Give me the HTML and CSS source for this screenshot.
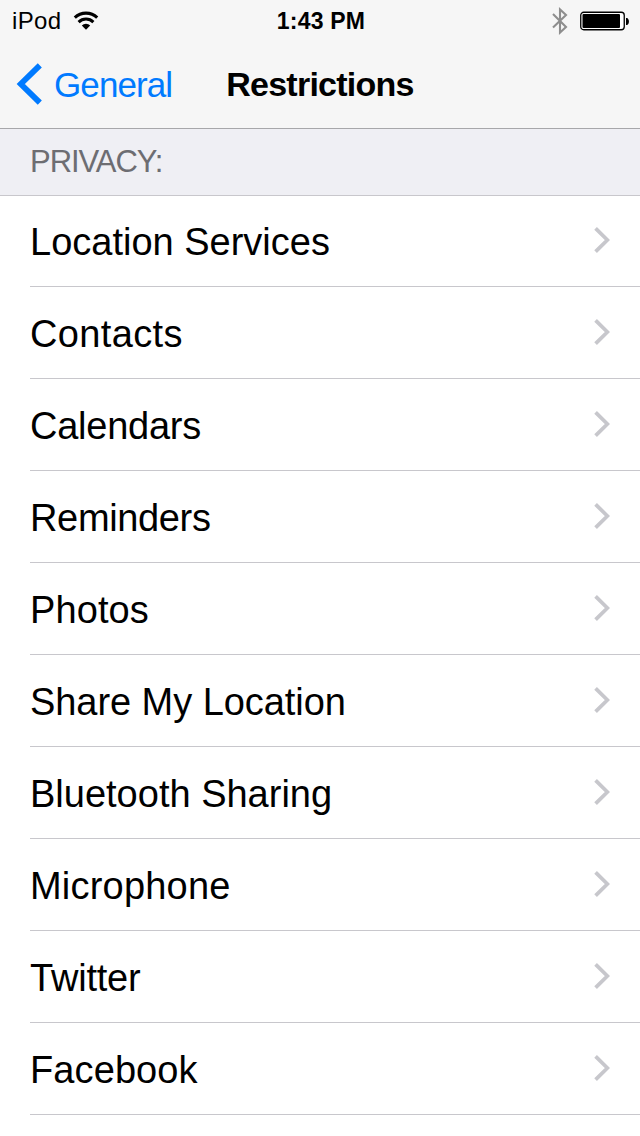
FILE: index.html
```html
<!DOCTYPE html>
<html lang="en">
<head>
    <meta charset="UTF-8">
    <meta name="viewport" content="width=device-width, initial-scale=1.0">
    <title>Restrictions</title>
    <link rel="stylesheet" href="styles.css">
</head>
<body>
    <header class="top">
        <div class="status-bar">
            <div class="carrier">
                <span class="device">iPod</span>
                <svg class="wifi" width="26" height="20" viewBox="0 0 26 20">
                    <path d="M1.8 6.6A16.2 16.2 0 0 1 24.2 6.6" fill="none" stroke="#000" stroke-width="3.1"/>
                    <path d="M5.6 11.1A10.6 10.6 0 0 1 20.4 11.1" fill="none" stroke="#000" stroke-width="3"/>
                    <path d="M8.8 14.6A5.8 5.8 0 0 1 17.2 14.6L13 18.8Z"/>
                </svg>
            </div>
            <span class="time">1:43 PM</span>
            <div class="indicators">
                <svg class="bluetooth" width="16" height="28" viewBox="0 0 16 28">
                    <path d="M1 7L14 20L8 25.5V2.5L14 8L1 20.5" fill="none" stroke="#8e8e8e" stroke-width="2.1"/>
                </svg>
                <svg class="battery" width="50" height="20" viewBox="0 0 50 20">
                    <rect x="0.75" y="1.25" width="43.5" height="17.5" rx="3" fill="#fff" stroke="#000" stroke-width="1.3"/>
                    <rect x="2.5" y="3" width="37.5" height="14" rx="1"/>
                    <path d="M46 7H47C49.6 8 49.6 13 47 14H46Z"/>
                </svg>
            </div>
        </div>
        <nav class="nav-bar">
            <a class="back">
                <svg width="26" height="44" viewBox="0 0 26 44">
                    <path d="M23.8 2.4L4.8 21L23.8 39.6" fill="none" stroke="#007aff" stroke-width="5.8"/>
                </svg>
                <span>General</span>
            </a>
            <h1>Restrictions</h1>
        </nav>
    </header>
    <h2 class="section-title">PRIVACY:</h2>
    <ul class="list">
        <li class="location"><span>Location Services</span><svg class="arrow" viewBox="0 0 16 26"><path d="M1.6 1.4L13.4 13L1.6 24.6"/></svg></li>
        <li class="contacts"><span>Contacts</span><svg class="arrow" viewBox="0 0 16 26"><path d="M1.6 1.4L13.4 13L1.6 24.6"/></svg></li>
        <li class="calendars"><span>Calendars</span><svg class="arrow" viewBox="0 0 16 26"><path d="M1.6 1.4L13.4 13L1.6 24.6"/></svg></li>
        <li class="reminders"><span>Reminders</span><svg class="arrow" viewBox="0 0 16 26"><path d="M1.6 1.4L13.4 13L1.6 24.6"/></svg></li>
        <li class="photos"><span>Photos</span><svg class="arrow" viewBox="0 0 16 26"><path d="M1.6 1.4L13.4 13L1.6 24.6"/></svg></li>
        <li class="share"><span>Share My Location</span><svg class="arrow" viewBox="0 0 16 26"><path d="M1.6 1.4L13.4 13L1.6 24.6"/></svg></li>
        <li class="sharing"><span>Bluetooth Sharing</span><svg class="arrow" viewBox="0 0 16 26"><path d="M1.6 1.4L13.4 13L1.6 24.6"/></svg></li>
        <li class="microphone"><span>Microphone</span><svg class="arrow" viewBox="0 0 16 26"><path d="M1.6 1.4L13.4 13L1.6 24.6"/></svg></li>
        <li class="twitter"><span>Twitter</span><svg class="arrow" viewBox="0 0 16 26"><path d="M1.6 1.4L13.4 13L1.6 24.6"/></svg></li>
        <li class="facebook"><span>Facebook</span><svg class="arrow" viewBox="0 0 16 26"><path d="M1.6 1.4L13.4 13L1.6 24.6"/></svg></li>
    </ul>
</body>
</html>
```
FILE: styles.css
```css
* {
    box-sizing: border-box;
}
body {
    margin: 0;
    height: 1136px;
    overflow: hidden;
    background-color: #fff;
    color: #000;
    font-family: "Liberation Sans", Arial, sans-serif;
}
.top {
    height: 129px;
    background-color: #f6f6f6;
    border-bottom: 1px solid #a7a7aa;
}
.status-bar {
    display: grid;
    grid-template-columns: 1fr auto 1fr;
    align-items: center;
    height: 41px;
    padding: 0 10px 0 12px;
    font-size: 24px;
}
.carrier {
    display: flex;
    align-items: center;
    gap: 12px;
}
.device {
    letter-spacing: 0.35px;
}
.time {
    padding-top: 2px;
    font-weight: bold;
    font-size: 23px;
    letter-spacing: 0.2px;
}
.indicators {
    display: flex;
    align-items: center;
    justify-content: flex-end;
    gap: 12px;
}
.nav-bar {
    display: grid;
    grid-template-columns: 1fr auto 1fr;
    align-items: center;
    height: 87px;
    padding: 0 16px;
}
.back {
    display: flex;
    align-items: center;
    gap: 12px;
    color: #007aff;
    font-size: 35px;
    letter-spacing: -0.9px;
}
.back svg {
    overflow: visible;
}
h1 {
    margin: 0;
    font-size: 34px;
    letter-spacing: -0.75px;
}
.section-title {
    position: relative;
    margin: 0;
    height: 67px;
    padding-left: 30px;
    background-color: #efeff4;
    border-bottom: 1px solid #c8c7cc;
    color: #6d6d72;
    font-size: 31px;
    font-weight: normal;
    line-height: 66px;
    letter-spacing: -1.05px;
}
.list {
    margin: -1px 0 0;
    padding: 0 0 0 30px;
    list-style: none;
}
.list li {
    display: flex;
    align-items: center;
    justify-content: space-between;
    height: 92px;
    padding-right: 30px;
    border-bottom: 1px solid #c8c7cc;
    font-size: 38px;
}
.list span {
    padding-top: 3px;
}
.contacts {
    letter-spacing: 0.35px;
}
.calendars {
    letter-spacing: -0.25px;
}
.reminders {
    letter-spacing: -0.35px;
}
.photos,
.facebook {
    letter-spacing: 0.1px;
}
.share {
    letter-spacing: -0.06px;
}
.microphone {
    letter-spacing: 0.2px;
}
.twitter {
    letter-spacing: -0.2px;
}
.arrow {
    width: 16px;
    height: 26px;
    margin-bottom: 2px;
    fill: none;
    stroke: #c7c7cc;
    stroke-width: 3.8;
}
```
